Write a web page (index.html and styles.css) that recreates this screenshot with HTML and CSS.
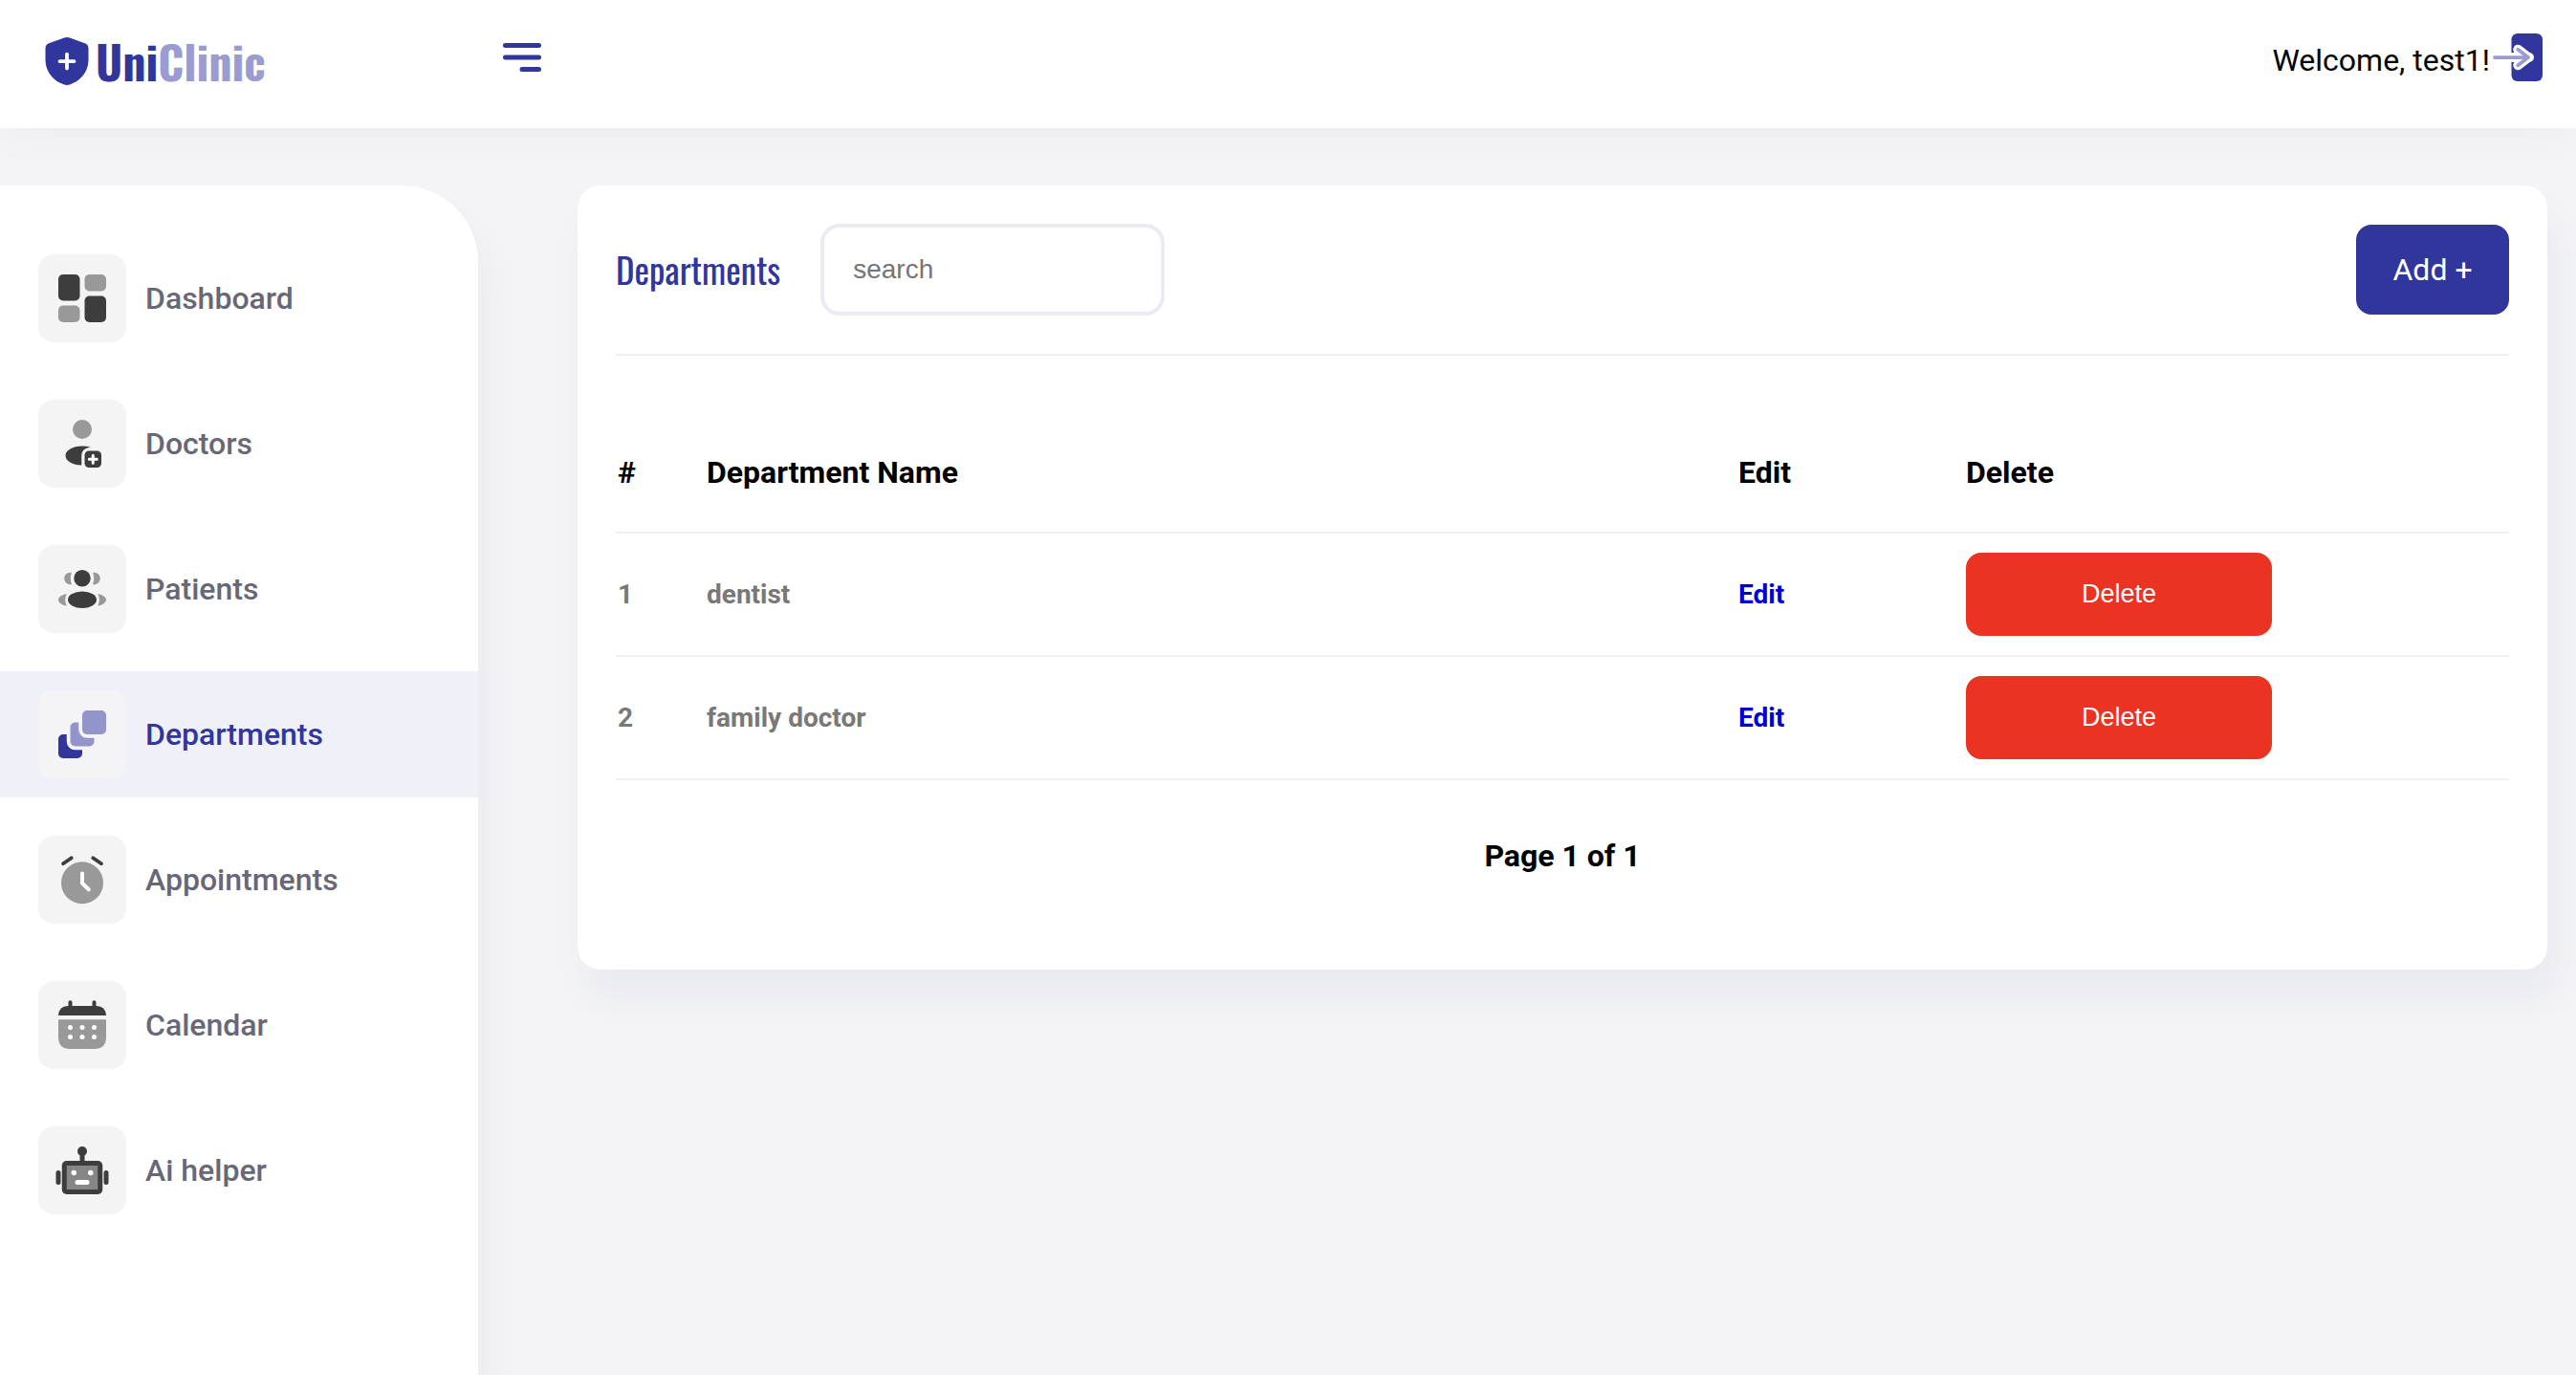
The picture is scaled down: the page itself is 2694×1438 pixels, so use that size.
FILE: index.html
```html
<!DOCTYPE html>
<html lang="en">
<head>
<meta charset="utf-8">
<meta name="viewport" content="width=device-width, initial-scale=1">
<title>UniClinic – Departments</title>
<link rel="stylesheet" href="styles.css">
</head>
<body>
<header class="topbar">
  <div class="topbar-start">
    <a class="logo" href="#">
      <svg class="icon" viewBox="0 0 24 24" aria-hidden="true"><path class="brand" d="M10.6 2.3Q12 1.7 13.400 2.300L19.500 4.500Q21 5 21 6.700V11.500C21 17 17 20.500 13.400 21.700Q12 22.300 10.600 21.700C7 20.500 3 17 3 11.500V6.700Q3 5 4.500 4.500Z"/><path class="line-white" d="M12 9v6M9 12h6" stroke-width="1.5"/></svg>
      <span class="logo-text">Uni<span class="logo-light">Clinic</span></span>
    </a>
    <button class="icon-button" type="button" aria-label="Toggle menu">
      <svg class="icon" viewBox="0 0 24 24" aria-hidden="true"><path class="line-brand" d="M5 7h14M5 12h14M12 17h7" stroke-width="2"/></svg>
    </button>
  </div>
  <div class="account">
    <span class="welcome">Welcome, test1!</span>
    <a class="logout" href="#" aria-label="Log out">
      <svg class="icon" viewBox="0 0 24 24" aria-hidden="true"><rect class="brand" x="9" y="2" width="13" height="20" rx="2.500"/><path class="line-white" d="M9.500 12H16.400M11.700 8.700L16 12L11.700 15.300" stroke-width="4"/><path class="line-soft" d="M2 12H16M11.700 8.700L16 12L11.700 15.300" stroke-width="1.500"/></svg>
    </a>
  </div>
</header>
<div class="layout">
  <nav class="sidebar" aria-label="Main">
    <a class="nav-item" href="#"><span class="tile"><svg class="icon" viewBox="0 0 24 24" aria-hidden="true"><rect class="dark" x="2" y="2" width="9" height="11" rx="2"/><rect class="grey" x="13" y="2" width="9" height="7" rx="2"/><rect class="grey" x="2" y="15" width="9" height="7" rx="2"/><rect class="dark" x="13" y="11" width="9" height="11" rx="2"/></svg></span>Dashboard</a>
    <a class="nav-item" href="#"><span class="tile"><svg class="icon" viewBox="0 0 24 24" aria-hidden="true"><circle class="grey" cx="12" cy="6" r="4"/><path class="dark" d="M15.600 13.500Q14 13 12 13C8 13 5 14.800 5 17S8 21 11.700 21V17.500C11.700 14.800 13 13.800 15.600 13.500Z"/><rect class="dark" x="13" y="15" width="7" height="7" rx="1.800"/><path class="line-white" d="M16.500 16.900v3.200M14.900 18.500h3.200" stroke-width="1.200"/></svg></span>Doctors</a>
    <a class="nav-item" href="#"><span class="tile"><svg class="icon" viewBox="0 0 24 24" aria-hidden="true"><circle class="dark" cx="12" cy="7.500" r="3.500"/><ellipse class="dark" cx="12" cy="16.500" rx="6" ry="3.500"/><path class="grey" d="M7.600 5.100C5.800 4.800 4.500 6 4.500 7.600S5.800 10.300 7.600 10.100Q6.600 7.600 7.600 5.100ZM16.400 5.100C18.200 4.800 19.500 6 19.500 7.600S18.200 10.300 16.400 10.100Q17.400 7.600 16.400 5.100ZM5.500 14.100C3.500 14.400 2 15.300 2 16.500S3.500 18.700 5.500 19Q4.200 16.500 5.500 14.100ZM18.500 14.100C20.500 14.400 22 15.300 22 16.500S20.500 18.700 18.500 19Q19.800 16.500 18.500 14.100Z"/></svg></span>Patients</a>
    <a class="nav-item nav-item-active" href="#" aria-current="page"><span class="tile"><svg class="icon" viewBox="0 0 24 24" aria-hidden="true"><rect class="soft" x="12" y="2" width="10" height="10" rx="2"/><path class="soft" d="M10.500 7H9a2 2 0 0 0-2 2v6a2 2 0 0 0 2 2h6a2 2 0 0 0 2-2v-1.500h-3a3.500 3.500 0 0 1-3.500-3.500z"/><path class="brand" d="M5.500 12H4a2 2 0 0 0-2 2v6a2 2 0 0 0 2 2h6a2 2 0 0 0 2-2v-1.500h-3a3.500 3.500 0 0 1-3.500-3.500z"/></svg></span>Departments</a>
    <a class="nav-item" href="#"><span class="tile"><svg class="icon" viewBox="0 0 24 24" aria-hidden="true"><circle class="grey" cx="12" cy="13.300" r="8.800"/><path class="line-white" d="M12 9.400V13.500L14.700 16.100" stroke-width="1.600"/><path class="line-dark" d="M4 5.300L7.500 2.900M20 5.300L16.500 2.900" stroke-width="1.500"/></svg></span>Appointments</a>
    <a class="nav-item" href="#"><span class="tile"><svg class="icon" viewBox="0 0 24 24" aria-hidden="true"><path class="line-dark" d="M7 2.500V5M17 2.500V5" stroke-width="1.600"/><path class="dark" d="M2 8Q2.300 4 6 4H18Q21.700 4 22 8Z"/><path class="grey" d="M2 9.700H22V17Q22 22 17 22H7Q2 22 2 17Z"/><g class="hole"><circle cx="7" cy="13" r="1"/><circle cx="12" cy="13" r="1"/><circle cx="17" cy="13" r="1"/><circle cx="7" cy="17" r="1"/><circle cx="12" cy="17" r="1"/><circle cx="17" cy="17" r="1"/></g></svg></span>Calendar</a>
    <a class="nav-item" href="#"><span class="tile"><svg class="icon" viewBox="0 0 24 24" aria-hidden="true"><circle class="dark" cx="12" cy="4" r="2"/><path class="dark" d="M11 4h2v5h-2z"/><rect class="dark" x="3.500" y="8" width="17" height="14" rx="2"/><path class="mid" d="M5.500 10h13v10h-13z"/><g class="hole"><circle cx="8.500" cy="13" r="1.100"/><circle cx="15.500" cy="13" r="1.100"/><rect x="9" y="16" width="6" height="2" rx="1"/></g><rect class="dark" x="1" y="12" width="2" height="6" rx="1"/><rect class="dark" x="21" y="12" width="2" height="6" rx="1"/></svg></span>Ai helper</a>
  </nav>
  <main class="main">
    <section class="card">
      <div class="card-head">
        <h1 class="title">Departments</h1>
        <input class="search" type="search" placeholder="search" aria-label="Search departments">
        <button class="add" type="button">Add +</button>
      </div>
      <table class="table">
        <colgroup><col class="col-number"><col><col class="col-edit"><col class="col-delete"></colgroup>
        <thead>
          <tr><th scope="col">#</th><th scope="col">Department Name</th><th scope="col">Edit</th><th scope="col">Delete</th></tr>
        </thead>
        <tbody>
          <tr><td>1</td><td>dentist</td><td><a class="edit" href="#">Edit</a></td><td><button class="delete" type="button">Delete</button></td></tr>
          <tr><td>2</td><td>family doctor</td><td><a class="edit" href="#">Edit</a></td><td><button class="delete" type="button">Delete</button></td></tr>
        </tbody>
      </table>
      <p class="pager">Page 1 of 1</p>
    </section>
  </main>
</div>
</body>
</html>
```
FILE: styles.css
```css
* {
  box-sizing: border-box;
}

body {
  margin: 0;
  min-height: 100vh;
  display: flex;
  flex-direction: column;
  background: #f4f4f6;
  color: #000;
  font-family: Roboto, sans-serif;
  font-size: 32px;
  line-height: 38px;
}

a {
  text-decoration: none;
}

button {
  border: 0;
  cursor: pointer;
}

/* Icons */
.icon {
  display: block;
  width: 60px;
  height: 60px;
}

.brand { fill: #30369c; }
.soft { fill: #9395ca; }
.dark { fill: #3d3d3d; }
.mid { fill: #868686; }
.grey { fill: #999; }
.hole { fill: #fff; }

.line-white,
.line-brand,
.line-soft,
.line-dark {
  fill: none;
  stroke-linecap: round;
  stroke-linejoin: round;
}

.line-white { stroke: #fff; }
.line-brand { stroke: #30369c; }
.line-soft { stroke: #9a9bd0; }
.line-dark { stroke: #3d3d3d; }

/* Top bar */
.topbar {
  display: flex;
  justify-content: space-between;
  align-items: flex-start;
  height: 134px;
  padding: 30px 30px 0 40px;
  background: #fff;
  box-shadow: 0 10px 40px rgba(0, 0, 0, 0.03);
}

.topbar-start,
.account {
  display: flex;
  align-items: flex-start;
}

.logo {
  display: flex;
  align-items: center;
  width: 476px;
  padding-top: 4px;
  color: #30369c;
}

.logo-text {
  font-family: Oswald, "Liberation Sans Narrow", "Liberation Sans", sans-serif;
  font-size: 48px;
  font-weight: 700;
  line-height: 60px;
}

.logo-light {
  color: #9a9bd0;
}

.icon-button {
  padding: 0;
  background: none;
}

.welcome {
  padding-top: 14px;
}

/* Layout */
.layout {
  flex: 1;
  display: flex;
  align-items: stretch;
  padding-top: 60px;
}

.sidebar {
  flex: 0 0 500px;
  display: flex;
  flex-direction: column;
  gap: 20px;
  padding: 52px 0;
  background: #fff;
  border-top-right-radius: 80px;
  box-shadow: 10px 30px 40px rgba(44, 54, 126, 0.05);
}

.nav-item {
  display: flex;
  align-items: center;
  gap: 20px;
  padding: 20px 40px;
  color: #686777;
  font-weight: 500;
}

.nav-item-active {
  background: #f0f0f9;
  color: #30369c;
}

.tile {
  padding: 16px;
  border-radius: 16px;
  background: #f4f4f4;
}

.nav-item-active .tile {
  background: #f4f4f7;
}

.main {
  flex: 1;
  padding: 0 30px 60px 104px;
}

/* Departments card */
.card {
  padding: 40px;
  border-radius: 24px;
  background: #fff;
  box-shadow: 10px 30px 40px rgba(44, 54, 126, 0.05);
}

.card-head {
  display: flex;
  align-items: center;
  gap: 42px;
  padding-bottom: 40px;
  border-bottom: 2px solid #f0f0f2;
}

.title {
  margin: 0;
  color: #30369c;
  font-family: Oswald, "Liberation Sans Narrow", "Liberation Sans", sans-serif;
  font-size: 37px;
  font-weight: 400;
}

.search {
  width: 360px;
  height: 96px;
  padding: 0 30px;
  border: 4px solid #ebebf5;
  border-radius: 20px;
  background: #fff;
  font-family: "Liberation Sans", sans-serif;
  font-size: 28px;
}

.search::placeholder {
  color: #757575;
}

.add {
  width: 160px;
  height: 94px;
  margin-left: auto;
  border-radius: 16px;
  background: #30369c;
  color: #fff;
  font-family: Roboto, sans-serif;
  font-size: 32px;
}

.table {
  width: 100%;
  margin-top: 60px;
  border-spacing: 0;
  table-layout: fixed;
  text-align: left;
}

.col-number { width: 93px; }
.col-edit { width: 238px; }
.col-delete { width: 570px; }

.table th,
.table td {
  border-bottom: 2px solid #f0f0f2;
  font-weight: 700;
}

.table th {
  padding: 43px 2px;
}

.table td {
  padding: 20px 2px;
  color: #787878;
  font-size: 28px;
}

.edit {
  color: #0000d6;
}

.delete {
  display: block;
  width: 320px;
  height: 87px;
  border-radius: 16px;
  background: #ea3323;
  color: #fff;
  font-family: "Liberation Sans", sans-serif;
  font-size: 27px;
}

.pager {
  margin: 60px 0;
  font-weight: 700;
  text-align: center;
}
```
